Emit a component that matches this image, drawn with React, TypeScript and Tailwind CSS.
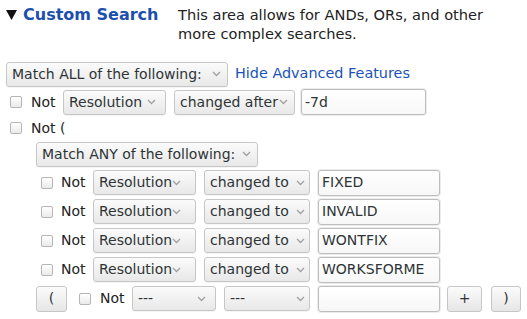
import type { ReactNode } from 'react';

function Chevron() {
  return (
    <svg width="9" height="6" viewBox="0 0 9 6" className="shrink-0">
      <path d="M1 1 L4.5 4.5 L8 1" fill="none" stroke="#a0a0a0" strokeWidth="1.3" />
    </svg>
  );
}

function Select({ label, w, arrow = 8 }: { label: string; w: number; arrow?: number }) {
  return (
    <div
      className="flex h-[25px] items-center justify-between rounded-[3px] border border-[#c6c6c6] bg-gradient-to-b from-[#fbfbfb] to-[#e8e8e8] pl-[5px] text-[#2e3436] shadow-[0_1px_0_rgba(0,0,0,0.04)]"
      style={{ width: w, paddingRight: arrow }}
    >
      <span className="whitespace-nowrap">{label}</span>
      <Chevron />
    </div>
  );
}

function Input({ value, w }: { value?: string; w: number }) {
  return (
    <div
      className="flex h-[26px] items-center rounded-[3px] border border-[#bdbdbd] bg-gradient-to-b from-white to-[#f7f7f7] pl-[3px] text-[#2e3436] shadow-[0_0_0_1px_#ececec]"
      style={{ width: w }}
    >
      {value}
    </div>
  );
}

function Check() {
  return (
    <span className="inline-block h-[12px] w-[12px] shrink-0 rounded-[2px] border border-[#b5b5b5] bg-gradient-to-b from-white to-[#eaeaea]" />
  );
}

function Button({ children, w }: { children: ReactNode; w: number }) {
  return (
    <div
      className="flex h-[26px] items-center justify-center rounded-[3px] border border-[#c6c6c6] bg-gradient-to-b from-[#fbfbfb] to-[#e6e6e6] text-[#2e3436]"
      style={{ width: w }}
    >
      {children}
    </div>
  );
}

function NestedRow({ value }: { value: string }) {
  return (
    <div className="flex h-[29px] items-center pl-[5px]">
      <Check />
      <span className="ml-[8px] w-[32px]">Not</span>
      <Select label="Resolution" w={103} arrow={14} />
      <div className="w-[8px]" />
      <Select label="changed to" w={106} arrow={4} />
      <div className="w-[8px]" />
      <Input value={value} w={122} />
    </div>
  );
}

export default function App() {
  return (
    <div className="h-[319px] w-[527px] bg-white pl-[6px] pt-[5px] text-[14px] text-[#222] [font-family:'DejaVu_Sans',sans-serif]">
      {/* Header */}
      <div className="flex">
        <div className="flex h-[19px] w-[172px] items-center text-[16px] font-bold leading-[19px] text-[#1c4fae]">
          <svg width="11" height="10" viewBox="0 0 11 10" className="mr-[6px] mt-[1px] shrink-0">
            <path d="M0 0 H11 L5.5 10 Z" fill="#111" />
          </svg>
          Custom Search
        </div>
        <div className="w-[320px] text-[14.6px] leading-[19px]">
          This area allows for ANDs, ORs, and other more complex searches.
        </div>
      </div>

      {/* Match ALL */}
      <div className="mt-[17px] flex h-[28px] items-center">
        <Select label="Match ALL of the following:" w={222} arrow={6} />
        <a className="ml-[7px] text-[14.4px] text-[#1a53b8]">Hide Advanced Features</a>
      </div>

      {/* Row 1 */}
      <div className="flex h-[28px] items-center pl-[4px]">
        <Check />
        <span className="ml-[9px] w-[32px]">Not</span>
        <Select label="Resolution" w={103} arrow={9} />
        <div className="w-[8px]" />
        <Select label="changed after" w={121} arrow={6} />
        <div className="w-[6px]" />
        <Input value="-7d" w={125} />
      </div>

      {/* Not ( */}
      <div className="flex h-[24px] items-center pl-[4px]">
        <Check />
        <span className="ml-[9px]">Not (</span>
      </div>

      {/* Nested group */}
      <div className="pl-[30px]">
        <div className="flex h-[28px] items-center">
          <Select label="Match ANY of the following:" w={222} arrow={6} />
        </div>
        <NestedRow value="FIXED" />
        <NestedRow value="INVALID" />
        <NestedRow value="WONTFIX" />
        <NestedRow value="WORKSFORME" />
        <div className="flex h-[29px] items-center">
          <Button w={31}>(</Button>
          <div className="ml-[12px] flex">
            <Check />
          </div>
          <span className="ml-[9px] w-[32px]">Not</span>
          <Select label="---" w={84} arrow={9} />
          <div className="w-[8px]" />
          <Select label="---" w={86} arrow={4} />
          <div className="w-[8px]" />
          <Input w={122} />
          <div className="w-[7px]" />
          <Button w={35}>+</Button>
          <div className="w-[9px]" />
          <Button w={30}>)</Button>
        </div>
      </div>
    </div>
  );
}
